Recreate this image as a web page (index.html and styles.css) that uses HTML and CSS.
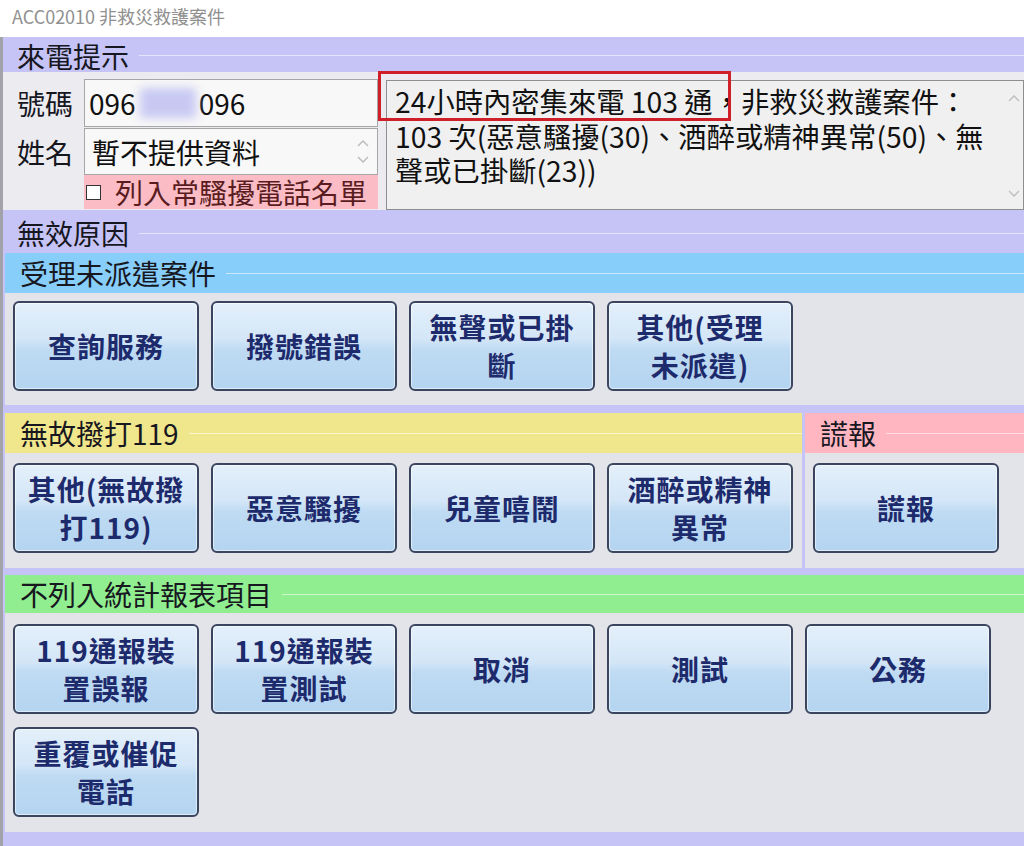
FILE: index.html
```html
<!DOCTYPE html>
<html lang="zh-Hant">
<head>
<meta charset="utf-8">
<title>ACC02010 非救災救護案件</title>
<link rel="stylesheet" href="styles.css">
</head>
<body>
<div class="title">ACC02010 非救災救護案件</div>
<div class="window">
  <div class="hdr hdr-top">來電提示</div>
  <div class="caller">
    <div class="fields">
      <div class="row">
        <span class="lbl">號碼</span>
        <div class="input phone">096<span class="blur"></span>096</div>
      </div>
      <div class="row row-name">
        <span class="lbl">姓名</span>
        <div class="input name">
          <span>暫不提供資料</span>
          <span class="spin">
            <svg width="12" height="8" viewBox="0 0 12 8"><path d="M1 7 L6 2 L11 7" fill="none" stroke="#b8b8b8" stroke-width="1.3"/></svg>
            <svg width="12" height="8" viewBox="0 0 12 8"><path d="M1 1 L6 6 L11 1" fill="none" stroke="#b8b8b8" stroke-width="1.3"/></svg>
          </span>
        </div>
      </div>
      <div class="row">
        <span class="lbl"></span>
        <div class="chk"><span class="box"></span>列入常騷擾電話名單</div>
      </div>
    </div>
    <div class="memo">
      <div class="memo-text"><span class="hl">24小時內密集來電 103 通</span>，非救災救護案件：<br>103 次(惡意騷擾(30)、酒醉或精神異常(50)、無<br>聲或已掛斷(23))</div>
      <div class="vscroll">
        <svg width="12" height="8" viewBox="0 0 12 8"><path d="M1 7 L6 2 L11 7" fill="none" stroke="#bdbdbd" stroke-width="1.3"/></svg>
        <svg width="12" height="8" viewBox="0 0 12 8"><path d="M1 1 L6 6 L11 1" fill="none" stroke="#bdbdbd" stroke-width="1.3"/></svg>
      </div>
    </div>
  </div>

  <div class="group">
    <div class="hdr hdr-group">無效原因</div>

    <div class="sub blue">
      <div class="hdr hdr-sub">受理未派遣案件</div>
      <div class="body body-blue">
        <div class="btn">查詢服務</div>
        <div class="btn">撥號錯誤</div>
        <div class="btn">無聲或已掛<br>斷</div>
        <div class="btn">其他(受理<br>未派遣)</div>
      </div>
    </div>

    <div class="pair">
      <div class="sub yellow">
        <div class="hdr hdr-sub">無故撥打119</div>
        <div class="body body-mid">
          <div class="btn">其他(無故撥<br>打119)</div>
          <div class="btn">惡意騷擾</div>
          <div class="btn">兒童嘻鬧</div>
          <div class="btn">酒醉或精神<br>異常</div>
        </div>
      </div>
      <div class="sub pink">
        <div class="hdr hdr-sub">謊報</div>
        <div class="body body-mid">
          <div class="btn">謊報</div>
        </div>
      </div>
    </div>

    <div class="sub green">
      <div class="hdr hdr-green">不列入統計報表項目</div>
      <div class="body body-green">
        <div class="btn">119通報裝<br>置誤報</div>
        <div class="btn">119通報裝<br>置測試</div>
        <div class="btn">取消</div>
        <div class="btn">測試</div>
        <div class="btn">公務</div>
        <div class="btn">重覆或催促<br>電話</div>
      </div>
    </div>
  </div>
</div>
</body>
</html>
```

FILE: styles.css
```css
* { box-sizing: border-box; }
html, body { margin: 0; padding: 0; }
body {
  width: 1024px;
  height: 846px;
  overflow: hidden;
  background: #ffffff;
  font-family: "Noto Sans CJK TC", "Noto Sans", sans-serif;
  color: #16161f;
}

.title {
  height: 37px;
  padding-left: 12px;
  font-size: 18px;
  line-height: 32px;
  color: #909090;
  white-space: nowrap;
}

.window {
  height: 809px;
  border-left: 3px solid #a2a2ab;
  background: #c6c4f6;
  overflow: hidden;
}

/* section headers with group-box line */
.hdr {
  display: flex;
  align-items: center;
  padding-left: 14px;
  font-size: 28px;
  line-height: 30px;
  white-space: nowrap;
  color: #17171f;
}
.hdr::after {
  content: "";
  flex: 1;
  height: 1px;
  margin-left: 10px;
  background: rgba(255, 255, 255, 0.55);
}
.hdr-top { height: 35px; padding-top: 2px; }
.hdr-group { height: 43px; padding-top: 3px; }
.hdr-sub { height: 40px; padding-left: 15px; }
.hdr-green { height: 38px; padding-left: 15px; }

/* caller info */
.caller {
  display: flex;
  align-items: flex-start;
  height: 138px;
  padding: 7px 0 0 14px;
  background: #ececf0;
}
.fields { display: flex; flex-direction: column; }
.row { display: flex; align-items: center; }
.row-name { margin-top: 1px; }
.lbl {
  width: 67px;
  font-size: 28px;
  line-height: 30px;
}
.input {
  width: 294px;
  display: flex;
  align-items: center;
  padding-left: 4px;
  border: 1px solid #a6a6a6;
  background: #f8f8f8;
  font-size: 28px;
  line-height: 30px;
  color: #111;
}
.phone { height: 48px; }
.name { height: 47px; padding-left: 7px; }
.blur {
  display: inline-block;
  width: 56px;
  height: 30px;
  margin: 0 3px 0 4px;
  background: #c8c9f3;
  filter: blur(5px);
}
.spin {
  margin-left: auto;
  margin-right: 8px;
  display: flex;
  flex-direction: column;
  gap: 9px;
}
.spin svg, .vscroll svg { display: block; }
.chk {
  width: 294px;
  height: 34px;
  display: flex;
  align-items: center;
  background: #fbbcc6;
  font-size: 28px;
  line-height: 30px;
  color: #5a1c1e;
}
.box {
  width: 15px;
  height: 15px;
  margin: 0 14px 0 2px;
  background: #ffffff;
  border: 1px solid #333333;
}

.memo {
  flex: 1;
  height: 130px;
  margin: 1px 0 0 8px;
  display: flex;
  background: #f0f0f0;
  border: 1px solid #8e8e8e;
}
.memo-text {
  flex: 1;
  padding: 3px 0 0 8px;
  font-size: 28.3px;
  line-height: 34.5px;
  white-space: nowrap;
  color: #111;
}
.hl { position: relative; }
.hl::after {
  content: "";
  position: absolute;
  left: -17px;
  right: -18px;
  top: -9px;
  bottom: 0;
  border: 3px solid #cf1f28;
}
.vscroll {
  width: 19px;
  display: flex;
  flex-direction: column;
  justify-content: space-between;
  align-items: center;
  padding: 13px 0 11px;
}

/* invalid-reason groups */
.sub { margin-left: 2px; }
.blue .hdr { background: #87cefa; }
.yellow .hdr { background: #f0e68c; }
.pink .hdr { background: #ffb6c1; }
.green .hdr { background: #90ee90; }

.body {
  display: flex;
  flex-wrap: wrap;
  align-content: flex-start;
  gap: 13px 12px;
  background: #e3e4e9;
  padding-left: 8px;
}
.body-blue { height: 112px; padding-top: 8px; }
.body-mid { height: 115px; padding-top: 10px; }
.body-green { height: 219px; padding-top: 11px; }

.pair {
  display: flex;
  gap: 3px;
  margin-top: 8px;
  margin-left: 2px;
}
.pair .sub { margin-left: 0; }
.yellow { width: 797px; }
.pink { flex: 1; }
.green { margin-top: 7px; }

.btn {
  width: 186px;
  height: 90px;
  display: flex;
  align-items: center;
  justify-content: center;
  text-align: center;
  border: 2px solid #3a455f;
  border-radius: 6px;
  background: linear-gradient(to bottom, #e4f0fb 0%, #d3e6f7 42%, #bfdbf3 54%, #b4d4f0 100%);
  box-shadow: inset 0 0 0 1px rgba(255, 255, 255, 0.55);
  font-size: 28px;
  font-weight: 700;
  line-height: 38px;
  letter-spacing: 1px;
  color: #1d2a6c;
  white-space: nowrap;
}
```
